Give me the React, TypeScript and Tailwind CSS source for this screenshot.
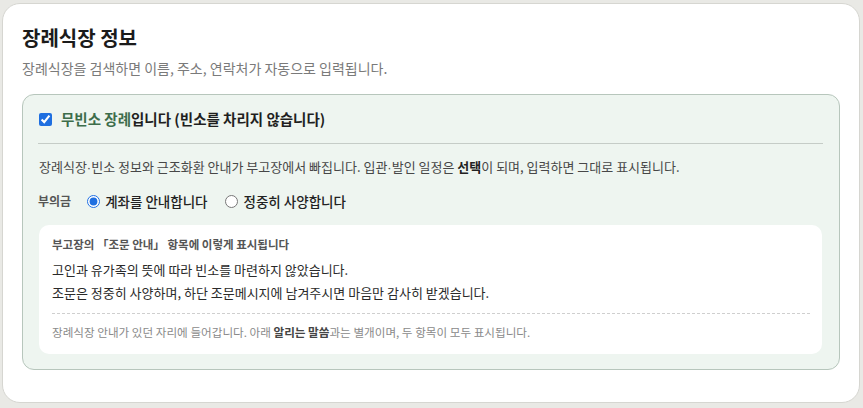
import React from "react";

function Dot() {
  return <span style={{ fontFamily: '"Liberation Sans", sans-serif' }}>·</span>;
}

export default function App() {
  const font = { fontFamily: '"Noto Sans CJK KR", "Noto Sans", sans-serif' };
  return (
    <div className="w-[863px] h-[408px] bg-[#e9e9e5] pl-[2px] pt-[3px]" style={font}>
      <div className="w-[858px] h-[400px] bg-white border border-[#d6d6d1] rounded-[18px] pl-[19px] pr-[19px] pt-[20px]">
        <h1 className="text-[20px] leading-[28px] font-bold text-[#1b1b1b]">장례식장 정보</h1>
        <p className="mt-[6px] text-[14px] leading-[20px] text-[#7a7a7a]">
          장례식장을 검색하면 이름, 주소, 연락처가 자동으로 입력됩니다.
        </p>
        <div className="mt-[16px] bg-[#eef5f0] border border-[#b7c6bc] rounded-[12px] pl-[16px] pr-[17px] pt-[14px] pb-[15px]">
          <label className="flex items-center h-[20px]">
            <input type="checkbox" defaultChecked className="w-[13px] h-[13px] m-0 accent-[#1f6fe0]" />
            <span className="ml-[9px] text-[14.5px] font-bold text-[#1f1f1f]">
              <span className="text-[#3d6d4b]">무빈소 장례</span>입니다 (빈소를 차리지 않습니다)
            </span>
          </label>
          <div className="mt-[14px] h-px bg-[#c5ccc7] -mx-px" />
          <p className="mt-[14px] text-[13px] leading-[18px] text-[#474747]">
            장례식장<Dot />빈소 정보와 근조화환 안내가 부고장에서 빠집니다. 입관<Dot />발인 일정은{" "}
            <b className="font-bold text-[#222]">선택</b>이 되며, 입력하면 그대로 표시됩니다.
          </p>
          <div className="mt-[14px] flex items-center h-[20px] -ml-px">
            <span className="text-[12px] font-bold text-[#555]">부의금</span>
            <label className="ml-[16px] flex items-center">
              <input type="radio" name="b" defaultChecked className="w-[13px] h-[13px] m-0 accent-[#1f6fe0]" />
              <span className="ml-[5px] text-[13.5px] font-medium text-[#222]">계좌를 안내합니다</span>
            </label>
            <label className="ml-[17px] flex items-center">
              <input type="radio" name="b" className="w-[13px] h-[13px] m-0" />
              <span className="ml-[6px] text-[13.5px] font-medium text-[#222]">정중히 사양합니다</span>
            </label>
          </div>
          <div className="mt-[14px] bg-white rounded-[10px] pl-[13px] pr-[12px] pt-[11px] pb-[14px]">
            <p className="text-[11.5px] leading-[16px] font-bold text-[#555]">
              부고장의 「조문 안내」 항목에 이렇게 표시됩니다
            </p>
            <p className="mt-[6px] text-[13px] leading-[23px] text-[#2a2a2a]">
              고인과 유가족의 뜻에 따라 빈소를 마련하지 않았습니다.
            </p>
            <p className="text-[13px] leading-[23px] text-[#2a2a2a]">
              조문은 정중히 사양하며, 하단 조문메시지에 남겨주시면 마음만 감사히 받겠습니다.
            </p>
            <div className="mt-[9px] border-t border-dashed border-[#cfcfcf]" />
            <p className="mt-[10px] text-[11.6px] leading-[16px] text-[#8a8a8a]">
              장례식장 안내가 있던 자리에 들어갑니다. 아래{" "}
              <b className="font-bold text-[#444]">알리는 말씀</b>과는 별개이며, 두 항목이 모두 표시됩니다.
            </p>
          </div>
        </div>
      </div>
    </div>
  );
}
